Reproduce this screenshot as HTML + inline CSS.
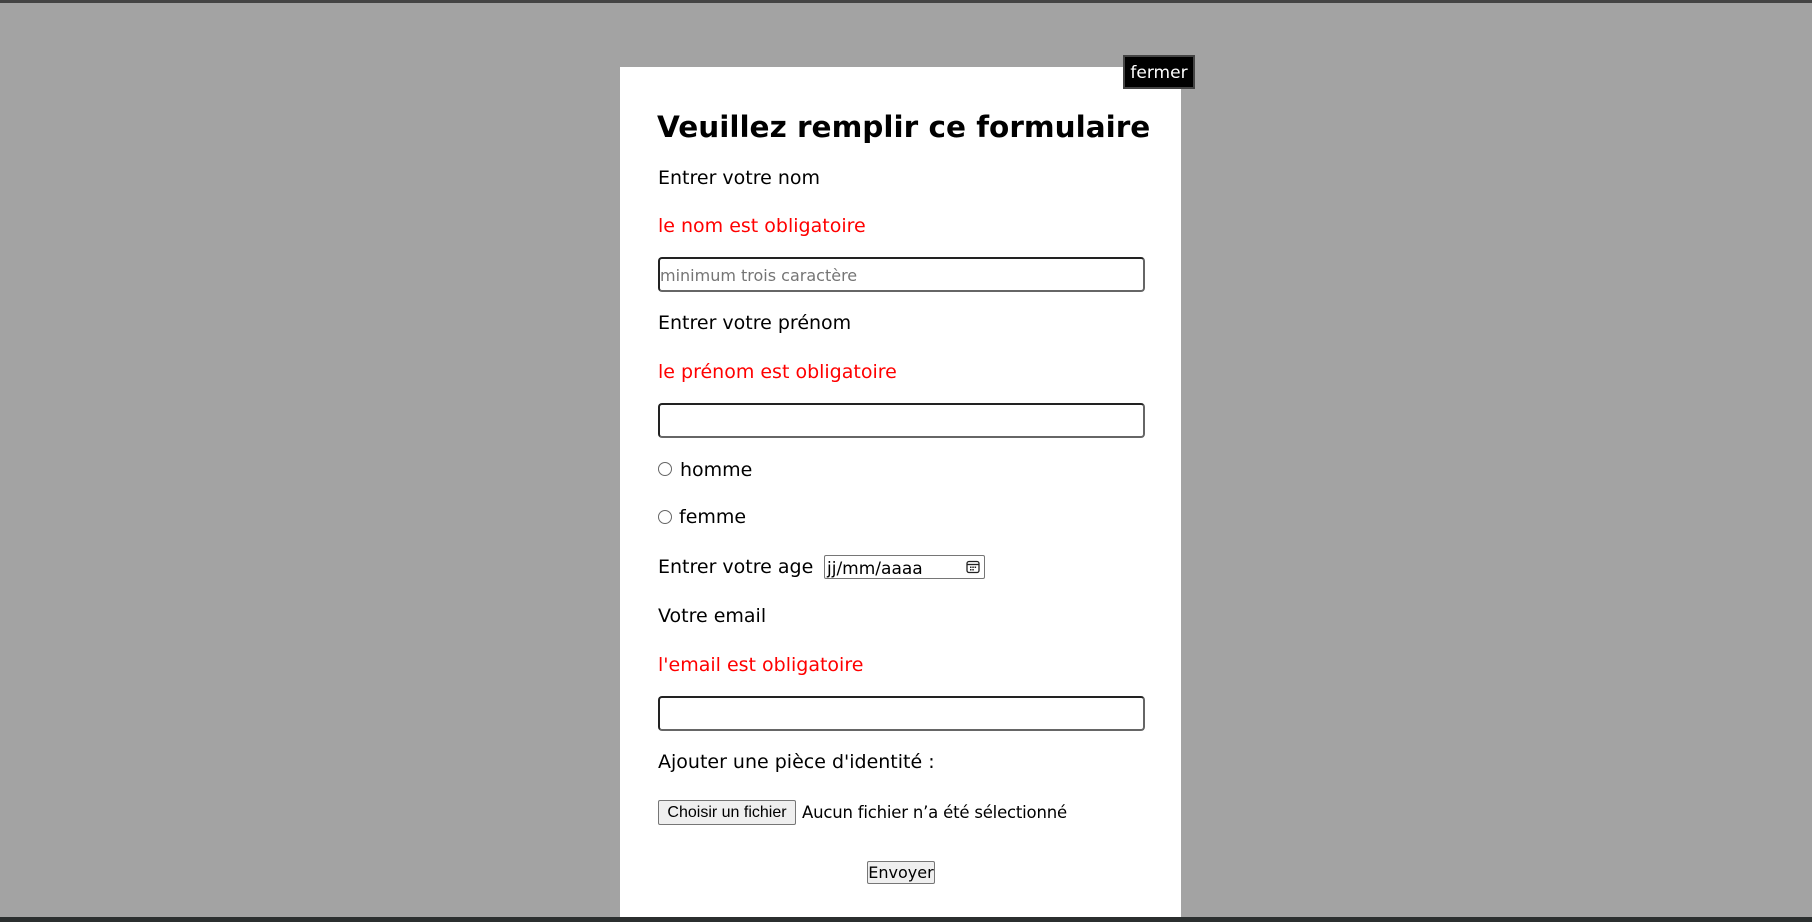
<!DOCTYPE html>
<html><head><meta charset="utf-8"><style>
*{margin:0;padding:0;box-sizing:border-box}
body{width:1812px;height:922px;background:#a3a3a3;position:relative;overflow:hidden;font-family:"DejaVu Sans","Liberation Sans",sans-serif}
.top{position:absolute;left:0;top:0;width:1812px;height:3px;background:#444}
.bot{position:absolute;left:0;top:917px;width:1812px;height:5px;background:#2b2f2f}
.panel{position:absolute;left:620px;top:67px;width:561px;height:850px;background:#fff}
.t{position:absolute;line-height:1;white-space:nowrap;font-size:19px;color:#000;letter-spacing:0}
.r{color:#f00}
.inp{position:absolute;left:658px;width:487px;height:35px;border:2px solid #222;border-right-color:#666;border-bottom-color:#666;border-radius:4px;background:#fff}
.radio{position:absolute;left:658px;width:14px;height:14px;border:1px solid #666;border-radius:50%;background:#fff}
.btn{position:absolute;background:#efefef;border:1px solid #767676;border-radius:2px;font-size:16px;line-height:1;display:flex;align-items:center;justify-content:center;color:#000}
</style></head><body>
<div class="top"></div>
<div class="panel"></div>
<div style="position:absolute;left:1123px;top:55px;width:72px;height:34px;background:#000;border:2px solid #444;color:#fff;font-size:17px;display:flex;align-items:center;justify-content:center;padding-top:2px;font-family:'DejaVu Sans',sans-serif">fermer</div>
<div class="t" style="left:657px;top:113px;font-size:29.5px;font-weight:bold">Veuillez remplir ce formulaire</div>
<div class="t" style="left:658px;top:169px">Entrer votre nom</div>
<div class="t r" style="left:658px;top:217px">le nom est obligatoire</div>
<div class="inp" style="top:257px"></div>
<div class="t" style="left:660px;top:268px;font-size:16px;color:#757575">minimum trois caractère</div>
<div class="t" style="left:658px;top:314px">Entrer votre prénom</div>
<div class="t r" style="left:658px;top:363px">le prénom est obligatoire</div>
<div class="inp" style="top:403px"></div>
<div class="radio" style="top:462px"></div>
<div class="t" style="left:680px;top:461px">homme</div>
<div class="radio" style="top:510px"></div>
<div class="t" style="left:679px;top:508px">femme</div>
<div class="t" style="left:658px;top:558px">Entrer votre age</div>
<div style="position:absolute;left:824px;top:555px;width:161px;height:24px;border:1px solid #767676;border-radius:2px;background:#fff"></div>
<div class="t" style="left:827px;top:561px;font-size:17px">jj/mm/aaaa</div>
<svg style="position:absolute;left:966px;top:560px" width="14" height="14" viewBox="0 0 14 14"><rect x="1" y="1.5" width="12" height="11" rx="2" fill="none" stroke="#222" stroke-width="1.3"/><line x1="1" y1="4.5" x2="13" y2="4.5" stroke="#222" stroke-width="1.3"/><g fill="#222"><rect x="4" y="6.5" width="1.5" height="1.5"/><rect x="6.3" y="6.5" width="1.5" height="1.5"/><rect x="8.6" y="6.5" width="1.5" height="1.5"/><rect x="4" y="9" width="1.5" height="1.5"/><rect x="6.3" y="9" width="1.5" height="1.5"/></g></svg>
<div class="t" style="left:658px;top:607px">Votre email</div>
<div class="t r" style="left:658px;top:656px">l'email est obligatoire</div>
<div class="inp" style="top:696px"></div>
<div class="t" style="left:658px;top:753px">Ajouter une pièce d'identité :</div>
<div class="btn" style="left:658px;top:800px;width:138px;height:25px;font-family:'Liberation Sans',sans-serif">Choisir un fichier</div>
<div class="t" style="left:802px;top:805px;font-size:16.5px;letter-spacing:-0.2px">Aucun fichier n’a été sélectionné</div>
<div class="btn" style="left:867px;top:861px;width:68px;height:23px;font-size:16px">Envoyer</div>
<div class="bot"></div>
</body></html>
